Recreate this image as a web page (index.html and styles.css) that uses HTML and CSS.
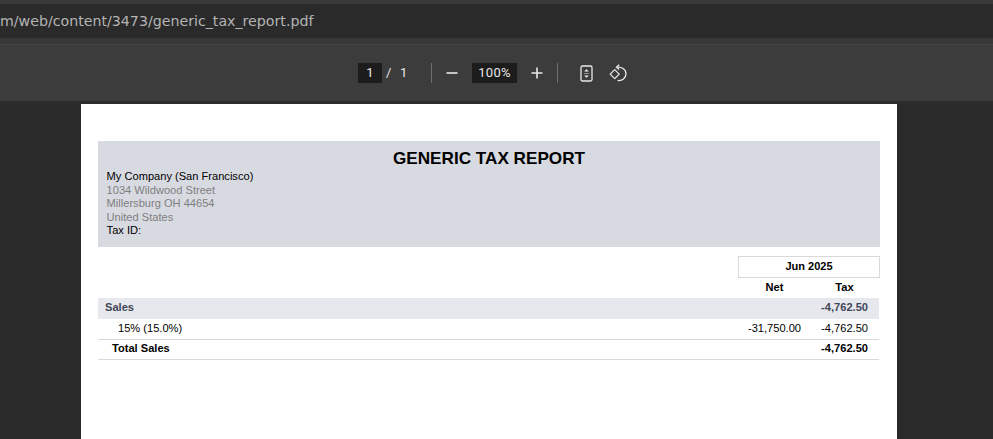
FILE: index.html
```html
<!DOCTYPE html>
<html lang="en">
<head>
<meta charset="utf-8">
<title>generic_tax_report.pdf</title>
<link rel="stylesheet" href="styles.css">
</head>
<body>
<div class="topstrip"></div>
<div class="urlbar"><span class="url">m/web/content/3473/generic_tax_report.pdf</span></div>
<div class="gap"></div>
<div class="toolbar">
  <span class="field page-field">1</span>
  <span class="tb-text slash">/</span>
  <span class="tb-text total">1</span>
  <span class="sep sep1"></span>
  <svg class="icon minus" width="12" height="12" viewBox="0 0 12 12"><path d="M0.5 6H11.5" stroke="#e8e8e8" stroke-width="1.6"/></svg>
  <span class="field zoom-field">100%</span>
  <svg class="icon plus" width="12" height="12" viewBox="0 0 12 12"><path d="M0.5 6H11.5M6 0.5V11.5" stroke="#e8e8e8" stroke-width="1.6"/></svg>
  <span class="sep sep2"></span>
  <svg class="icon fit" width="13" height="17" viewBox="0 0 13 17" fill="none"><rect x="1" y="1" width="11" height="15" rx="1.5" stroke="#e8e8e8" stroke-width="1.3"/><path d="M4.2 6.6L6.5 4.2L8.8 6.6H4.2ZM4.2 10.4H8.8L6.5 12.8L4.2 10.4Z" fill="#f0f0f0"/><path d="M4 8.5H9" stroke="#9a9a9a" stroke-width="0.9"/></svg>
  <svg class="icon rotate" width="18" height="18" viewBox="0 0 18 18" fill="none"><path d="M5.7 5.6L1.2 10.1L5.7 14.6L10.2 10.1Z" stroke="#e8e8e8" stroke-width="1.3" stroke-linejoin="round"/><path d="M8 3.2C12.4 2.6 17 5.2 17 9.8C17 14 13.2 17.3 8.6 16.4" stroke="#e8e8e8" stroke-width="1.3"/><path d="M10.2 0.7L7.4 3.2L10.2 5.6" stroke="#e8e8e8" stroke-width="1.3"/></svg>
</div>
<div class="toolbar-shadow"></div>
<main class="viewer">
  <section class="sheet">
    <header class="band">
      <h1 class="title">GENERIC TAX REPORT</h1>
      <div class="company">
        <div>My Company (San Francisco)</div>
        <div class="muted">1034 Wildwood Street</div>
        <div class="muted">Millersburg OH 44654</div>
        <div class="muted">United States</div>
        <div>Tax ID:</div>
      </div>
    </header>
    <div class="period-row"><div class="period">Jun 2025</div></div>
    <div class="row heads"><span></span><span class="num">Net</span><span class="num">Tax</span></div>
    <div class="row section"><span>Sales</span><span class="num"></span><span class="num">-4,762.50</span></div>
    <div class="row line"><span class="indent2">15% (15.0%)</span><span class="num">-31,750.00</span><span class="num">-4,762.50</span></div>
    <div class="row total-row"><span class="indent1">Total Sales</span><span class="num"></span><span class="num">-4,762.50</span></div>
  </section>
</main>
</body>
</html>
```
FILE: styles.css
```css
* { box-sizing: border-box; }
html, body { margin: 0; height: 100%; overflow: hidden; }
body { background: #2a2a2a; font-family: "Liberation Sans", Arial, sans-serif; }

.topstrip { height: 4px; background: #3a3a3a; }
.urlbar { height: 34px; background: #2a2a2a; display: flex; align-items: center; overflow: hidden; }
.url { font-family: "DejaVu Sans", sans-serif; font-size: 14.2px; color: #b4b4b4; white-space: nowrap; }
.gap { height: 6px; background: #383838; }

.toolbar { height: 57px; background: #3c3c3c; border-top: 1px solid #474747; position: relative; }
.toolbar > * { position: absolute; }
.toolbar-shadow { height: 3px; background: #2c2c2c; }
.field { background: #1c1c1c; color: #e6e6e6; font-family: Roboto, "Liberation Sans", sans-serif; font-size: 13px; height: 20px; line-height: 20px; text-align: center; top: 18px; letter-spacing: .3px; }
.page-field { left: 358px; width: 24px; }
.zoom-field { left: 472px; width: 45px; }
.tb-text { color: #e6e6e6; font-family: Roboto, "Liberation Sans", sans-serif; font-size: 13px; top: 18px; line-height: 20px; }
.slash { left: 386px; }
.total { left: 400px; }
.sep { width: 1px; height: 20px; background: #6e6e6e; top: 18px; }
.sep1 { left: 431px; }
.sep2 { left: 557px; }
.minus { left: 446px; top: 22px; }
.plus { left: 531px; top: 22px; }
.fit { left: 580px; top: 20px; }
.rotate { left: 609px; top: 19px; }

.viewer { padding-left: 81px; }
.sheet { width: 816px; height: 500px; background: #fff; padding: 37px 17px 0; color: #000; }

.band { height: 106px; width: 782px; background: #d8dae2; padding: 7px 8.6px 0; }
.title { margin: 0; font-size: 17.15px; line-height: 20px; font-weight: 700; text-align: center; }
.company { font-size: 11.1px; line-height: 13.6px; margin-top: 2px; }
.muted { color: #7f7f7f; }

.period-row { display: flex; justify-content: flex-end; margin-top: 9px; }
.period { width: 142px; height: 22px; border: 1px solid #d9d9d9; font-size: 11px; font-weight: 700; line-height: 19px; text-align: center; }

.row { display: grid; grid-template-columns: 1fr 71px 71px; width: 781px; font-size: 11.1px; }
.num { text-align: right; padding-right: 11px; }
.row .num:nth-child(2) { padding-right: 7px; }
.heads { height: 20px; line-height: 19px; font-weight: 700; }
.heads .num { text-align: center; padding-right: 0; }
.heads .num:nth-child(2) { padding-right: 0; padding-left: 4px; }
.heads .num:nth-child(3) { padding-left: 2px; }
.section { height: 21px; line-height: 19px; background: #e7e8ed; color: #3f4658; font-weight: 700; padding-left: 7px; }
.line { height: 21px; line-height: 19px; border-bottom: 1px solid #d9d9d9; }
.total-row { height: 20px; line-height: 17px; border-bottom: 1px solid #d9d9d9; font-weight: 700; }
.indent2 { padding-left: 20px; }
.indent1 { padding-left: 14px; }
```
